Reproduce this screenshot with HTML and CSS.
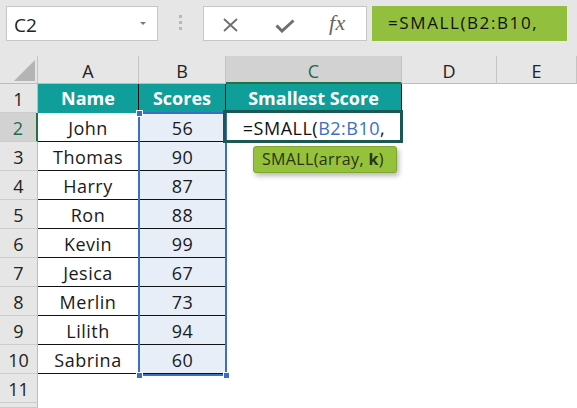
FILE: index.html
```html
<!DOCTYPE html>
<html>
<head>
<meta charset="utf-8">
<link rel="stylesheet" href="styles.css">
</head>
<body>
<div class="toolbar">
  <div class="namebox"><span class="nb-text">C2</span><span class="caret"></span></div>
  <div class="grip"><i></i><i></i><i></i></div>
  <div class="fbuttons">
    <svg class="ic-x" width="17" height="14" viewBox="0 0 17 14"><path d="M2 1 L15 13 M15 1 L2 13" stroke="#6e6e6e" stroke-width="1.8" fill="none"/></svg>
    <svg class="ic-ok" width="20" height="14" viewBox="0 0 20 14"><path d="M1.5 6.5 L7 12 L18.5 1.5" stroke="#6e6e6e" stroke-width="3" fill="none"/></svg>
    <span class="fx">fx</span>
  </div>
  <div class="finput">=SMALL(B2:B10,</div>
</div>
<div class="sheet">
  <div class="grid">
    <div class="ch corner"><svg width="21" height="21" viewBox="0 0 21 21"><path d="M21 0 L21 21 L0 21 Z" fill="#b4b4b4"/></svg></div>
    <div class="ch">A</div>
    <div class="ch">B</div>
    <div class="ch sel">C</div>
    <div class="ch">D</div>
    <div class="ch">E</div>

    <div class="rh">1</div>
    <div class="hd">Name</div>
    <div class="hd">Scores</div>
    <div class="hd">Smallest Score</div>
    <div class="e"></div><div class="e"></div>

    <div class="rh sel">2</div>
    <div class="a">John</div><div class="b">56</div>
    <div class="c2">=SMALL(<span class="ref">B2:B10</span>,</div>
    <div class="e"></div><div class="e"></div>

    <div class="rh">3</div>
    <div class="a">Thomas</div><div class="b">90</div>
    <div class="e"></div><div class="e"></div><div class="e"></div>

    <div class="rh">4</div>
    <div class="a">Harry</div><div class="b">87</div>
    <div class="e"></div><div class="e"></div><div class="e"></div>

    <div class="rh">5</div>
    <div class="a">Ron</div><div class="b">88</div>
    <div class="e"></div><div class="e"></div><div class="e"></div>

    <div class="rh">6</div>
    <div class="a">Kevin</div><div class="b">99</div>
    <div class="e"></div><div class="e"></div><div class="e"></div>

    <div class="rh">7</div>
    <div class="a">Jesica</div><div class="b">67</div>
    <div class="e"></div><div class="e"></div><div class="e"></div>

    <div class="rh">8</div>
    <div class="a">Merlin</div><div class="b">73</div>
    <div class="e"></div><div class="e"></div><div class="e"></div>

    <div class="rh">9</div>
    <div class="a">Lilith</div><div class="b">94</div>
    <div class="e"></div><div class="e"></div><div class="e"></div>

    <div class="rh">10</div>
    <div class="a">Sabrina</div><div class="b">60</div>
    <div class="e"></div><div class="e"></div><div class="e"></div>

    <div class="rh">11</div>
    <div class="e"></div><div class="e"></div><div class="e"></div><div class="e"></div><div class="e"></div>

    <div class="rh"></div>
    <div class="e"></div><div class="e"></div><div class="e"></div><div class="e"></div><div class="e"></div>
  </div>

  <div class="range">
    <span class="hdl h-tl"></span>
    <span class="hdl h-bl"></span>
    <span class="hdl h-br"></span>
  </div>
  <div class="active"></div>
  <div class="tip">SMALL(array, <b>k</b>)</div>
</div>
</body>
</html>
```

FILE: styles.css
```css
* { box-sizing: border-box; }
html, body { margin: 0; padding: 0; }
body {
  width: 577px;
  height: 408px;
  overflow: hidden;
  background: #ffffff;
  font-family: "Open Sans", "Noto Sans", sans-serif;
  color: #1a1a1a;
}

/* ---------- formula bar ---------- */
.toolbar {
  height: 56px;
  background: #e6e6e6;
  display: flex;
  align-items: flex-start;
  padding: 6px 0 0 6px;
}
.namebox {
  width: 152px;
  height: 35px;
  background: #fff;
  border: 1px solid #c6c6c6;
  display: flex;
  align-items: center;
  justify-content: space-between;
  padding: 2px 11px 0 7px;
  font-size: 19px;
  color: #222;
}
.caret {
  width: 0; height: 0;
  border-left: 3px solid transparent;
  border-right: 3px solid transparent;
  border-top: 3px solid #7a7a7a;
  margin-bottom: 2px;
}
.grip {
  width: 45px;
  display: flex;
  flex-direction: column;
  align-items: center;
  gap: 3px;
  padding-top: 9px;
}
.grip i {
  display: block;
  width: 3px; height: 3px;
  background: #b8b8b8;
}
.fbuttons {
  width: 164px;
  height: 35px;
  background: #fff;
  border: 1px solid #c6c6c6;
  display: flex;
  align-items: center;
  padding-left: 18px;
}
.ic-x { margin-top: 2px; }
.ic-ok { margin-left: 36px; margin-top: 4px; }
.fx {
  margin-left: 34px;
  font-family: "Liberation Serif", "DejaVu Serif", serif;
  font-style: italic;
  font-size: 22px;
  color: #666666;
  letter-spacing: 0.5px;
  margin-top: -2px;
}
.finput {
  margin-left: 5px;
  width: 195px;
  height: 35px;
  background: #92c03e;
  font-size: 17px;
  line-height: 34px;
  padding-left: 16px;
  letter-spacing: 1.6px;
  color: #111;
  white-space: nowrap;
}

/* ---------- sheet ---------- */
.sheet { position: relative; }
.grid {
  display: grid;
  grid-template-columns: 38px 101px 87px 176px 95px 80px;
  grid-template-rows: 28px repeat(11, 29px) 5px;
  font-size: 18px;
}
.ch {
  background: #e6e6e6;
  border-right: 1px solid #c4c4c4;
  border-bottom: 1px solid #bdbdbd;
  text-align: center;
  line-height: 28px;
  padding-top: 1px;
  color: #222;
}
.ch.sel {
  background: #d2d2d2;
  color: #1f6b47;
  border-bottom: 2px solid #217346;
  border-right-color: #c4c4c4;
}
.corner { position: relative; }
.corner svg { position: absolute; left: 14px; top: 4px; }
.rh {
  background: #e6e6e6;
  border-right: 1px solid #bdbdbd;
  border-bottom: 1px solid #cccccc;
  text-align: center;
  line-height: 29px;
  padding-top: 1px;
  color: #222;
}
.rh.sel {
  background: #d2d2d2;
  color: #1f6b47;
  border-right: 2px solid #217346;
}
.hd {
  background: #0f9e99;
  color: #fff;
  font-weight: 700;
  text-align: center;
  line-height: 29px;
  border-right: 1px solid #111;
}
.a, .b {
  text-align: center;
  line-height: 29px;
  padding-top: 1px;
  letter-spacing: 0.5px;
  border-bottom: 1px solid #111;
}
.a { border-right: 1px solid #111; background: #fff; }
.b { background: #e8eef8; }
.c2 {
  text-align: center;
  line-height: 29px;
  padding-top: 1px;
  letter-spacing: 0.5px;
  white-space: nowrap;
  color: #111;
}
.ref { color: #3b6fc6; }
.e { background: #fff; }

/* ---------- overlays ---------- */
.range {
  position: absolute;
  left: 138px;
  top: 56px;
  width: 89px;
  height: 264px;
  border: 2px solid #3a6fc6;
}
.hdl {
  position: absolute;
  width: 7px; height: 7px;
  background: #3a6fc6;
  border: 1px solid #fff;
}
.h-tl { left: -4px; top: -4px; }
.h-bl { left: -4px; bottom: -5px; }
.h-br { right: -5px; bottom: -5px; }
.active {
  position: absolute;
  left: 223px;
  top: 54px;
  width: 180px;
  height: 33px;
  border: 3px solid #1d5752;
}
.tip {
  position: absolute;
  left: 253px;
  top: 90px;
  width: 144px;
  height: 27px;
  background: #95c13b;
  border: 1px solid #7ea533;
  border-radius: 3px;
  box-shadow: 2px 3px 5px rgba(0,0,0,0.28);
  font-size: 16px;
  line-height: 25px;
  padding-left: 8px;
  letter-spacing: 0.35px;
  color: #2a3318;
  white-space: nowrap;
}
.tip b { font-weight: 700; }
```
